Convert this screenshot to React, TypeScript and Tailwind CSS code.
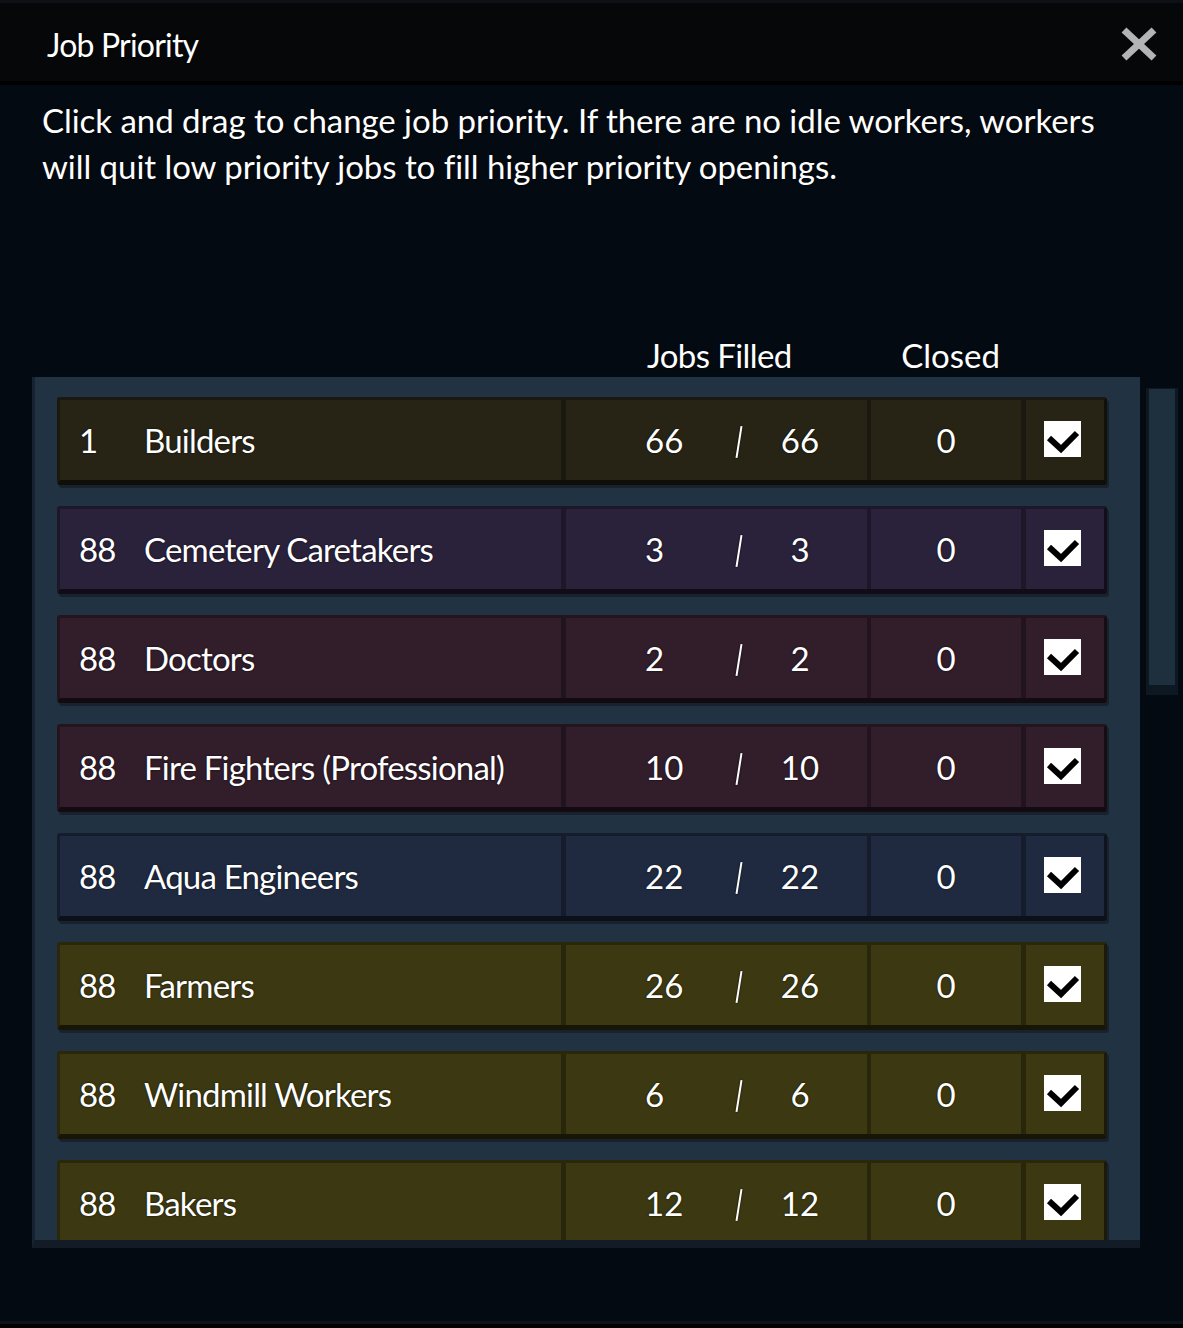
import React from "react";

type Row = { p: string; name: string; a: number; b: number; bg: string };

const rows: Row[] = [
  { p: "1", name: "Builders", a: 66, b: 66, bg: "bg-[#272416]" },
  { p: "88", name: "Cemetery Caretakers", a: 3, b: 3, bg: "bg-[#2a213b]" },
  { p: "88", name: "Doctors", a: 2, b: 2, bg: "bg-[#321d2b]" },
  { p: "88", name: "Fire Fighters (Professional)", a: 10, b: 10, bg: "bg-[#321d2b]" },
  { p: "88", name: "Aqua Engineers", a: 22, b: 22, bg: "bg-[#1f2a40]" },
  { p: "88", name: "Farmers", a: 26, b: 26, bg: "bg-[#3c3811]" },
  { p: "88", name: "Windmill Workers", a: 6, b: 6, bg: "bg-[#3c3811]" },
  { p: "88", name: "Bakers", a: 12, b: 12, bg: "bg-[#3c3811]" },
];

function Check() {
  return (
    <div className="w-[37px] h-[36px] bg-white flex items-center justify-center">
      <svg width="37" height="36" viewBox="0 0 37 36">
        <polyline points="5,17 17,28 33,12" fill="none" stroke="#000" strokeWidth="6" strokeLinejoin="miter" />
      </svg>
    </div>
  );
}

function JobRow({ r }: { r: Row }) {
  return (
    <div
      className={`ml-[22px] w-[1050px] h-[88px] shrink-0 flex rounded-[3px] border-t-[3px] border-l-[3px] border-r-[3px] border-b-[5px] border-t-[rgba(0,0,0,0.3)] border-l-[rgba(0,0,0,0.3)] border-r-[rgba(0,0,0,0.55)] border-b-[rgba(0,0,0,0.6)] shadow-[2px_3px_0_rgba(0,0,0,0.3)] text-[33px] ${r.bg}`}
    >
      <div className="w-[501px] flex items-center pl-[19px] whitespace-nowrap tracking-[-0.8px]">
        <span className="w-[65px]">{r.p}</span>
        <span>{r.name}</span>
      </div>
      <div className="w-[5px] bg-[rgba(0,0,0,0.3)]" />
      <div className="w-[301px] flex items-center">
        <span className="ml-[79px] w-[75px]">{r.a}</span>
        <span className="w-[37px] flex justify-center items-center pt-[4px]">
          <span className="block w-[2px] h-[32px] bg-white rotate-[9deg] shadow-[0_0_2px_rgba(0,0,0,0.8)]" />
        </span>
        <span className="w-[86px] text-center">{r.b}</span>
      </div>
      <div className="w-[4px] bg-[rgba(0,0,0,0.3)]" />
      <div className="w-[150px] flex items-center justify-center">0</div>
      <div className="w-[5px] bg-[rgba(0,0,0,0.3)]" />
      <div className="w-[78px] flex items-center pl-[18px] pb-[2px]">
        <Check />
      </div>
    </div>
  );
}

export default function App() {
  return (
    <div className="w-[1183px] h-[1328px] overflow-hidden bg-[#040a11] text-white font-['Lato',sans-serif] text-[33px] leading-[46px] [text-shadow:0_0_2px_rgba(0,0,0,0.8)] flex flex-col">
      <div className="h-[3px] bg-[#0d1014]" />
      <div className="h-[78px] bg-[#050709] flex items-center justify-between pl-[47px] pr-[26px]">
        <span className="text-[32px] tracking-[-0.8px] pt-[6px]">Job Priority</span>
        <svg width="36" height="34" viewBox="0 0 36 34" className="mt-[4px]">
          <line x1="3" y1="3" x2="33" y2="31" stroke="#b4b4b4" strokeWidth="7" />
          <line x1="33" y1="3" x2="3" y2="31" stroke="#b4b4b4" strokeWidth="7" />
        </svg>
      </div>
      <div className="h-[4px] bg-[#000]" />
      <div className="flex-1 flex flex-col">
        <p className="pl-[42px] pt-[12px] whitespace-nowrap tracking-[-0.05px]">
          Click and drag to change job priority. If there are no idle workers, workers
          <br />
          will quit low priority jobs to fill higher priority openings.
        </p>
        <div className="mt-[143px] h-[45px] flex">
          <span className="ml-[647px] tracking-[-0.6px]">Jobs Filled</span>
          <span className="ml-auto mr-[183px]">Closed</span>
        </div>
        <div className="flex items-start">
          <div className="ml-[32px] w-[1108px] h-[871px] shrink-0 bg-[#213242] border-l-[3px] border-l-[#172330] border-b-[8px] border-b-[#131c26] overflow-hidden pt-[20px] flex flex-col gap-[21px]">
            {rows.map((r, i) => (
              <JobRow key={i} r={r} />
            ))}
          </div>
          <div className="ml-[3px] w-[3px] h-[307px] mt-[11px] bg-[#050a0f]" />
          <div className="w-[32px] h-[307px] mt-[11px] bg-[#1e2f3d] border-x-[3px] border-t-[1px] border-b-[10px] border-[#0d1823]" />
        </div>
        <div className="flex-1" />
        <div className="h-[3px] bg-[#0a1419]" />
        <div className="h-[4px] bg-[#000]" />
      </div>
    </div>
  );
}
